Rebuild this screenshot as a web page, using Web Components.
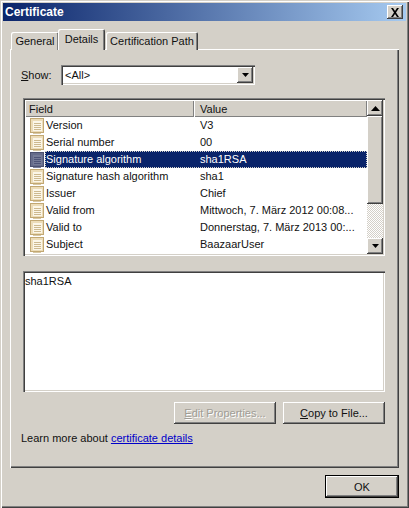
<!DOCTYPE html>
<html>
<head>
<meta charset="utf-8">
<title>Certificate</title>
<style>
    html, body { margin: 0; padding: 0; background: #d4d0c8; }
    body { font: 11px "Liberation Sans", "Noto Sans", sans-serif; color: #111; }
</style>
</head>
<body>
<cert-dialog title-text="Certificate">
    <cert-tabs></cert-tabs>
    <cert-combo label="Show:" value="&lt;All&gt;"></cert-combo>
    <cert-list>
        <cert-row field="Version" value="V3"></cert-row>
        <cert-row field="Serial number" value="00"></cert-row>
        <cert-row field="Signature algorithm" value="sha1RSA" selected></cert-row>
        <cert-row field="Signature hash algorithm" value="sha1"></cert-row>
        <cert-row field="Issuer" value="Chief"></cert-row>
        <cert-row field="Valid from" value="Mittwoch, 7. März 2012 00:08..."></cert-row>
        <cert-row field="Valid to" value="Donnerstag, 7. März 2013 00:..."></cert-row>
        <cert-row field="Subject" value="BaazaarUser"></cert-row>
    </cert-list>
    <cert-textbox>sha1RSA</cert-textbox>
    <cert-actions>
        <cert-button disabled style="width:102px"><u>E</u>dit Properties...</cert-button>
        <cert-button style="width:102px"><u>C</u>opy to File...</cert-button>
    </cert-actions>
    <cert-learn>Learn more about <a slot="link">certificate details</a></cert-learn>
    <cert-button slot="footer" style="width:74px;height:23px" default>OK</cert-button>
</cert-dialog>

<script>
const bevel = "inset -1px -1px 0 #404040, inset 1px 1px 0 #fff, inset -2px -2px 0 #808080";
const sunken = "inset 1px 1px 0 #808080, inset 2px 2px 0 #404040, inset -1px -1px 0 #fff, inset -2px -2px 0 #d4d0c8";

class CertDialog extends HTMLElement {
    constructor() {
        super();
        this.attachShadow({mode: "open"}).innerHTML = `
            <style>
                :host {
                    display: flex;
                    flex-direction: column;
                    box-sizing: border-box;
                    width: 409px;
                    height: 508px;
                    padding: 3px;
                    background: #d4d0c8;
                    box-shadow: inset 1px 1px 0 #d4d0c8, inset 2px 2px 0 #fff, inset -1px -1px 0 #404040, inset -2px -2px 0 #808080;
                }
                .title {
                    display: flex;
                    align-items: center;
                    justify-content: space-between;
                    height: 18px;
                    padding: 0 3px 0 2px;
                    background: linear-gradient(90deg, #0a246a, #a6caf0);
                    color: #fff;
                    font-weight: 700;
                    font-size: 12px;
                }
                .close {
                    width: 16px;
                    height: 14px;
                    display: flex;
                    align-items: center;
                    justify-content: center;
                    background: #d4d0c8;
                    box-shadow: ${bevel};
                }
                .body {
                    flex: 1;
                    display: flex;
                    flex-direction: column;
                    padding: 8px 7px 7px 7px;
                    min-height: 0;
                }
                .panel {
                    display: flex;
                    flex-direction: column;
                    box-sizing: border-box;
                    height: 419px;
                    padding: 16px 14px 0 11px;
                    box-shadow: inset 1px 1px 0 #fff, inset -1px -1px 0 #404040, inset -2px -2px 0 #808080;
                }
                .footer {
                    display: flex;
                    justify-content: flex-end;
                    padding-top: 7px;
                }
            </style>
            <div class="title">
                <span id="t"></span>
                <span class="close">
                    <svg width="10" height="9" viewBox="0 0 10 9"><path d="M1 0h2l2 3 2-3h2L6 4.500 9 9H7L5 6 3 9H1l3-4.500z" fill="#000"/></svg>
                </span>
            </div>
            <div class="body">
                <slot name="tabs"></slot>
                <div class="panel"><slot></slot></div>
                <div class="footer"><slot name="footer"></slot></div>
            </div>
        `;
    }

    connectedCallback() {
        this.shadowRoot.getElementById("t").textContent = this.getAttribute("title-text");
        this.querySelector("cert-tabs").slot = "tabs";
    }
}

class CertTabs extends HTMLElement {
    constructor() {
        super();
        this.attachShadow({mode: "open"}).innerHTML = `
            <style>
                :host { display: flex; align-items: flex-end; height: 21px; padding-left: 1px; margin-bottom: -1px; position: relative; z-index: 1; }
                .tab {
                    box-sizing: border-box;
                    height: 18px;
                    line-height: 18px;
                    text-align: center;
                    white-space: nowrap;
                    background: #d4d0c8;
                    box-shadow: inset 1px 1px 0 #fff, inset -1px 0 0 #404040, inset -2px 0 0 #808080;
                    border-radius: 2px 2px 0 0;
                }
                .tab.first { width: 48px; }
                .tab.on {
                    width: 47px;
                    height: 21px;
                    margin: 0 -1px;
                    line-height: 20px;
                    position: relative;
                }
                .tab.last { margin-left: 2px; width: 92px; }
            </style>
            <div class="tab first">General</div>
            <div class="tab on">Details</div>
            <div class="tab last">Certification Path</div>
        `;
    }
}

class CertCombo extends HTMLElement {
    constructor() {
        super();
        this.attachShadow({mode: "open"}).innerHTML = `
            <style>
                :host { display: flex; align-items: center; height: 20px; margin-bottom: 13px; }
                .label { width: 40px; margin-top: -1px; }
                .box {
                    box-sizing: border-box;
                    width: 194px;
                    height: 20px;
                    display: flex;
                    align-items: center;
                    justify-content: space-between;
                    padding: 2px;
                    background: #fff;
                    box-shadow: ${sunken};
                }
                .val { padding-left: 2px; }
                .btn {
                    box-sizing: border-box;
                    width: 16px;
                    height: 16px;
                    display: flex;
                    align-items: center;
                    justify-content: center;
                    background: #d4d0c8;
                    box-shadow: ${bevel};
                }
            </style>
            <span class="label"></span>
            <div class="box">
                <span class="val"></span>
                <span class="btn"><svg width="7" height="4" viewBox="0 0 7 4"><path d="M0 0h7L3.500 4z" fill="#000"/></svg></span>
            </div>
        `;
    }

    connectedCallback() {
        const label = this.getAttribute("label");
        this.shadowRoot.querySelector(".label").innerHTML = `<u>${label[0]}</u>${label.slice(1)}`;
        this.shadowRoot.querySelector(".val").textContent = this.getAttribute("value");
    }
}

class CertList extends HTMLElement {
    constructor() {
        super();
        this.attachShadow({mode: "open"}).innerHTML = `
            <style>
                :host {
                    display: block;
                    box-sizing: border-box;
                    width: 362px;
                    height: 158px;
                    padding: 2px;
                    margin: 0 0 15px 2px;
                    background: #fff;
                    box-shadow: ${sunken};
                }
                .wrap { display: flex; height: 154px; }
                .main { flex: 1; min-width: 0; overflow: hidden; }
                .head { display: flex; height: 17px; line-height: 18px; background: #d4d0c8; }
                .head div { box-sizing: border-box; box-shadow: inset 1px 1px 0 #fff, inset -1px -1px 0 #808080; }
                .head .f { width: 169px; padding-left: 4px; }
                .head .v { flex: 1; padding-left: 6px; }
                .rows { display: flex; flex-direction: column; }
                .bar { width: 16px; display: flex; flex-direction: column; }
                .arrow {
                    height: 16px;
                    display: flex;
                    align-items: center;
                    justify-content: center;
                    background: #d4d0c8;
                    box-shadow: ${bevel};
                }
                .thumb { height: 88px; background: #d4d0c8; box-shadow: ${bevel}; }
                .track {
                    flex: 1;
                    background-color: #fff;
                    background-image: conic-gradient(#d4d0c8 25%, #fff 0 50%, #d4d0c8 0 75%, #fff 0);
                    background-size: 2px 2px;
                }
            </style>
            <div class="wrap">
                <div class="main">
                    <div class="head"><div class="f">Field</div><div class="v">Value</div></div>
                    <div class="rows"><slot></slot></div>
                </div>
                <div class="bar">
                    <div class="arrow"><svg width="9" height="5" viewBox="0 0 9 5"><path d="M4.500 0L9 5H0z" fill="#000"/></svg></div>
                    <div class="thumb"></div>
                    <div class="track"></div>
                    <div class="arrow"><svg width="7" height="4" viewBox="0 0 7 4"><path d="M0 0h7L3.500 4z" fill="#000"/></svg></div>
                </div>
            </div>
        `;
    }
}

class CertRow extends HTMLElement {
    constructor() {
        super();
        this.attachShadow({mode: "open"}).innerHTML = `
            <style>
                :host { display: flex; align-items: center; height: 17px; white-space: nowrap; }
                .icon { width: 14px; height: 16px; margin: 0 1px 0 5px; flex: none; }
                .cells { flex: 1; display: flex; height: 17px; line-height: 17px; min-width: 0; }
                .f { width: 149px; flex: none; padding-left: 1px; box-sizing: border-box; }
                .v { flex: 1; padding-left: 6px; }
                :host([selected]) .cells {
                    background: #0a246a;
                    color: #fff;
                    outline: 1px dotted #d4d0c8;
                    outline-offset: -1px;
                }
            </style>
            <svg class="icon" viewBox="0 0 14 16">
                <rect id="a" x="0.500" y="0.500" width="13" height="14" fill="#ecdcb8" stroke="#c2a873"/>
                <rect id="b" x="3" y="3" width="9" height="10" fill="#fbf6e8"/>
                <path id="c" d="M4 5.500h7M4 7.500h7M4 9.500h7M4 11.500h7" stroke="#cdb98f" fill="none"/>
                <path id="d" d="M3 15.500h8" stroke="#d8c8a4"/>
            </svg>
            <div class="cells"><div class="f"></div><div class="v"></div></div>
        `;
    }

    connectedCallback() {
        const root = this.shadowRoot;
        root.querySelector(".f").textContent = this.getAttribute("field");
        root.querySelector(".v").textContent = this.getAttribute("value");
        if (this.hasAttribute("selected")) {
            // Windows tints the selected row's icon with the highlight colour
            root.getElementById("a").setAttribute("fill", "#666c8b");
            root.getElementById("a").setAttribute("stroke", "#4c5170");
            root.getElementById("b").setAttribute("fill", "#757b97");
            root.getElementById("c").setAttribute("stroke", "#4e5478");
            root.getElementById("d").setAttribute("stroke", "#7a7f9a");
        }
    }
}

class CertTextbox extends HTMLElement {
    constructor() {
        super();
        this.attachShadow({mode: "open"}).innerHTML = `
            <style>
                :host {
                    display: block;
                    box-sizing: border-box;
                    width: 362px;
                    height: 121px;
                    padding: 2px 2px 0 2px;
                    margin: 0 0 10px 2px;
                    background: #fff;
                    box-shadow: ${sunken};
                    line-height: 16px;
                }
            </style>
            <slot></slot>
        `;
    }
}

class CertActions extends HTMLElement {
    constructor() {
        super();
        this.attachShadow({mode: "open"}).innerHTML = `
            <style>
                :host { display: flex; justify-content: flex-end; gap: 7px; width: 364px; margin-bottom: 6px; }
            </style>
            <slot></slot>
        `;
    }
}

class CertButton extends HTMLElement {
    constructor() {
        super();
        this.attachShadow({mode: "open"}).innerHTML = `
            <style>
                :host {
                    display: flex;
                    align-items: center;
                    justify-content: center;
                    box-sizing: border-box;
                    height: 22px;
                    background: #d4d0c8;
                    box-shadow: ${bevel};
                    white-space: nowrap;
                }
                :host([disabled]) { color: #a09d96; text-shadow: 1px 1px 0 #fff; }
                :host([default]) { box-shadow: inset 0 0 0 1px #000, inset -2px -2px 0 #404040, inset 2px 2px 0 #fff, inset -3px -3px 0 #808080; }
            </style>
            <slot></slot>
        `;
    }
}

class CertLearn extends HTMLElement {
    constructor() {
        super();
        this.attachShadow({mode: "open"}).innerHTML = `
            <style>
                :host { display: block; height: 17px; line-height: 17px; white-space: nowrap; }
                ::slotted(a) { color: #0000c8; text-decoration: underline; }
            </style>
            <slot></slot><slot name="link"></slot>
        `;
    }
}

customElements.define("cert-dialog", CertDialog);
customElements.define("cert-tabs", CertTabs);
customElements.define("cert-combo", CertCombo);
customElements.define("cert-list", CertList);
customElements.define("cert-row", CertRow);
customElements.define("cert-textbox", CertTextbox);
customElements.define("cert-actions", CertActions);
customElements.define("cert-button", CertButton);
customElements.define("cert-learn", CertLearn);
</script>
</body>
</html>
